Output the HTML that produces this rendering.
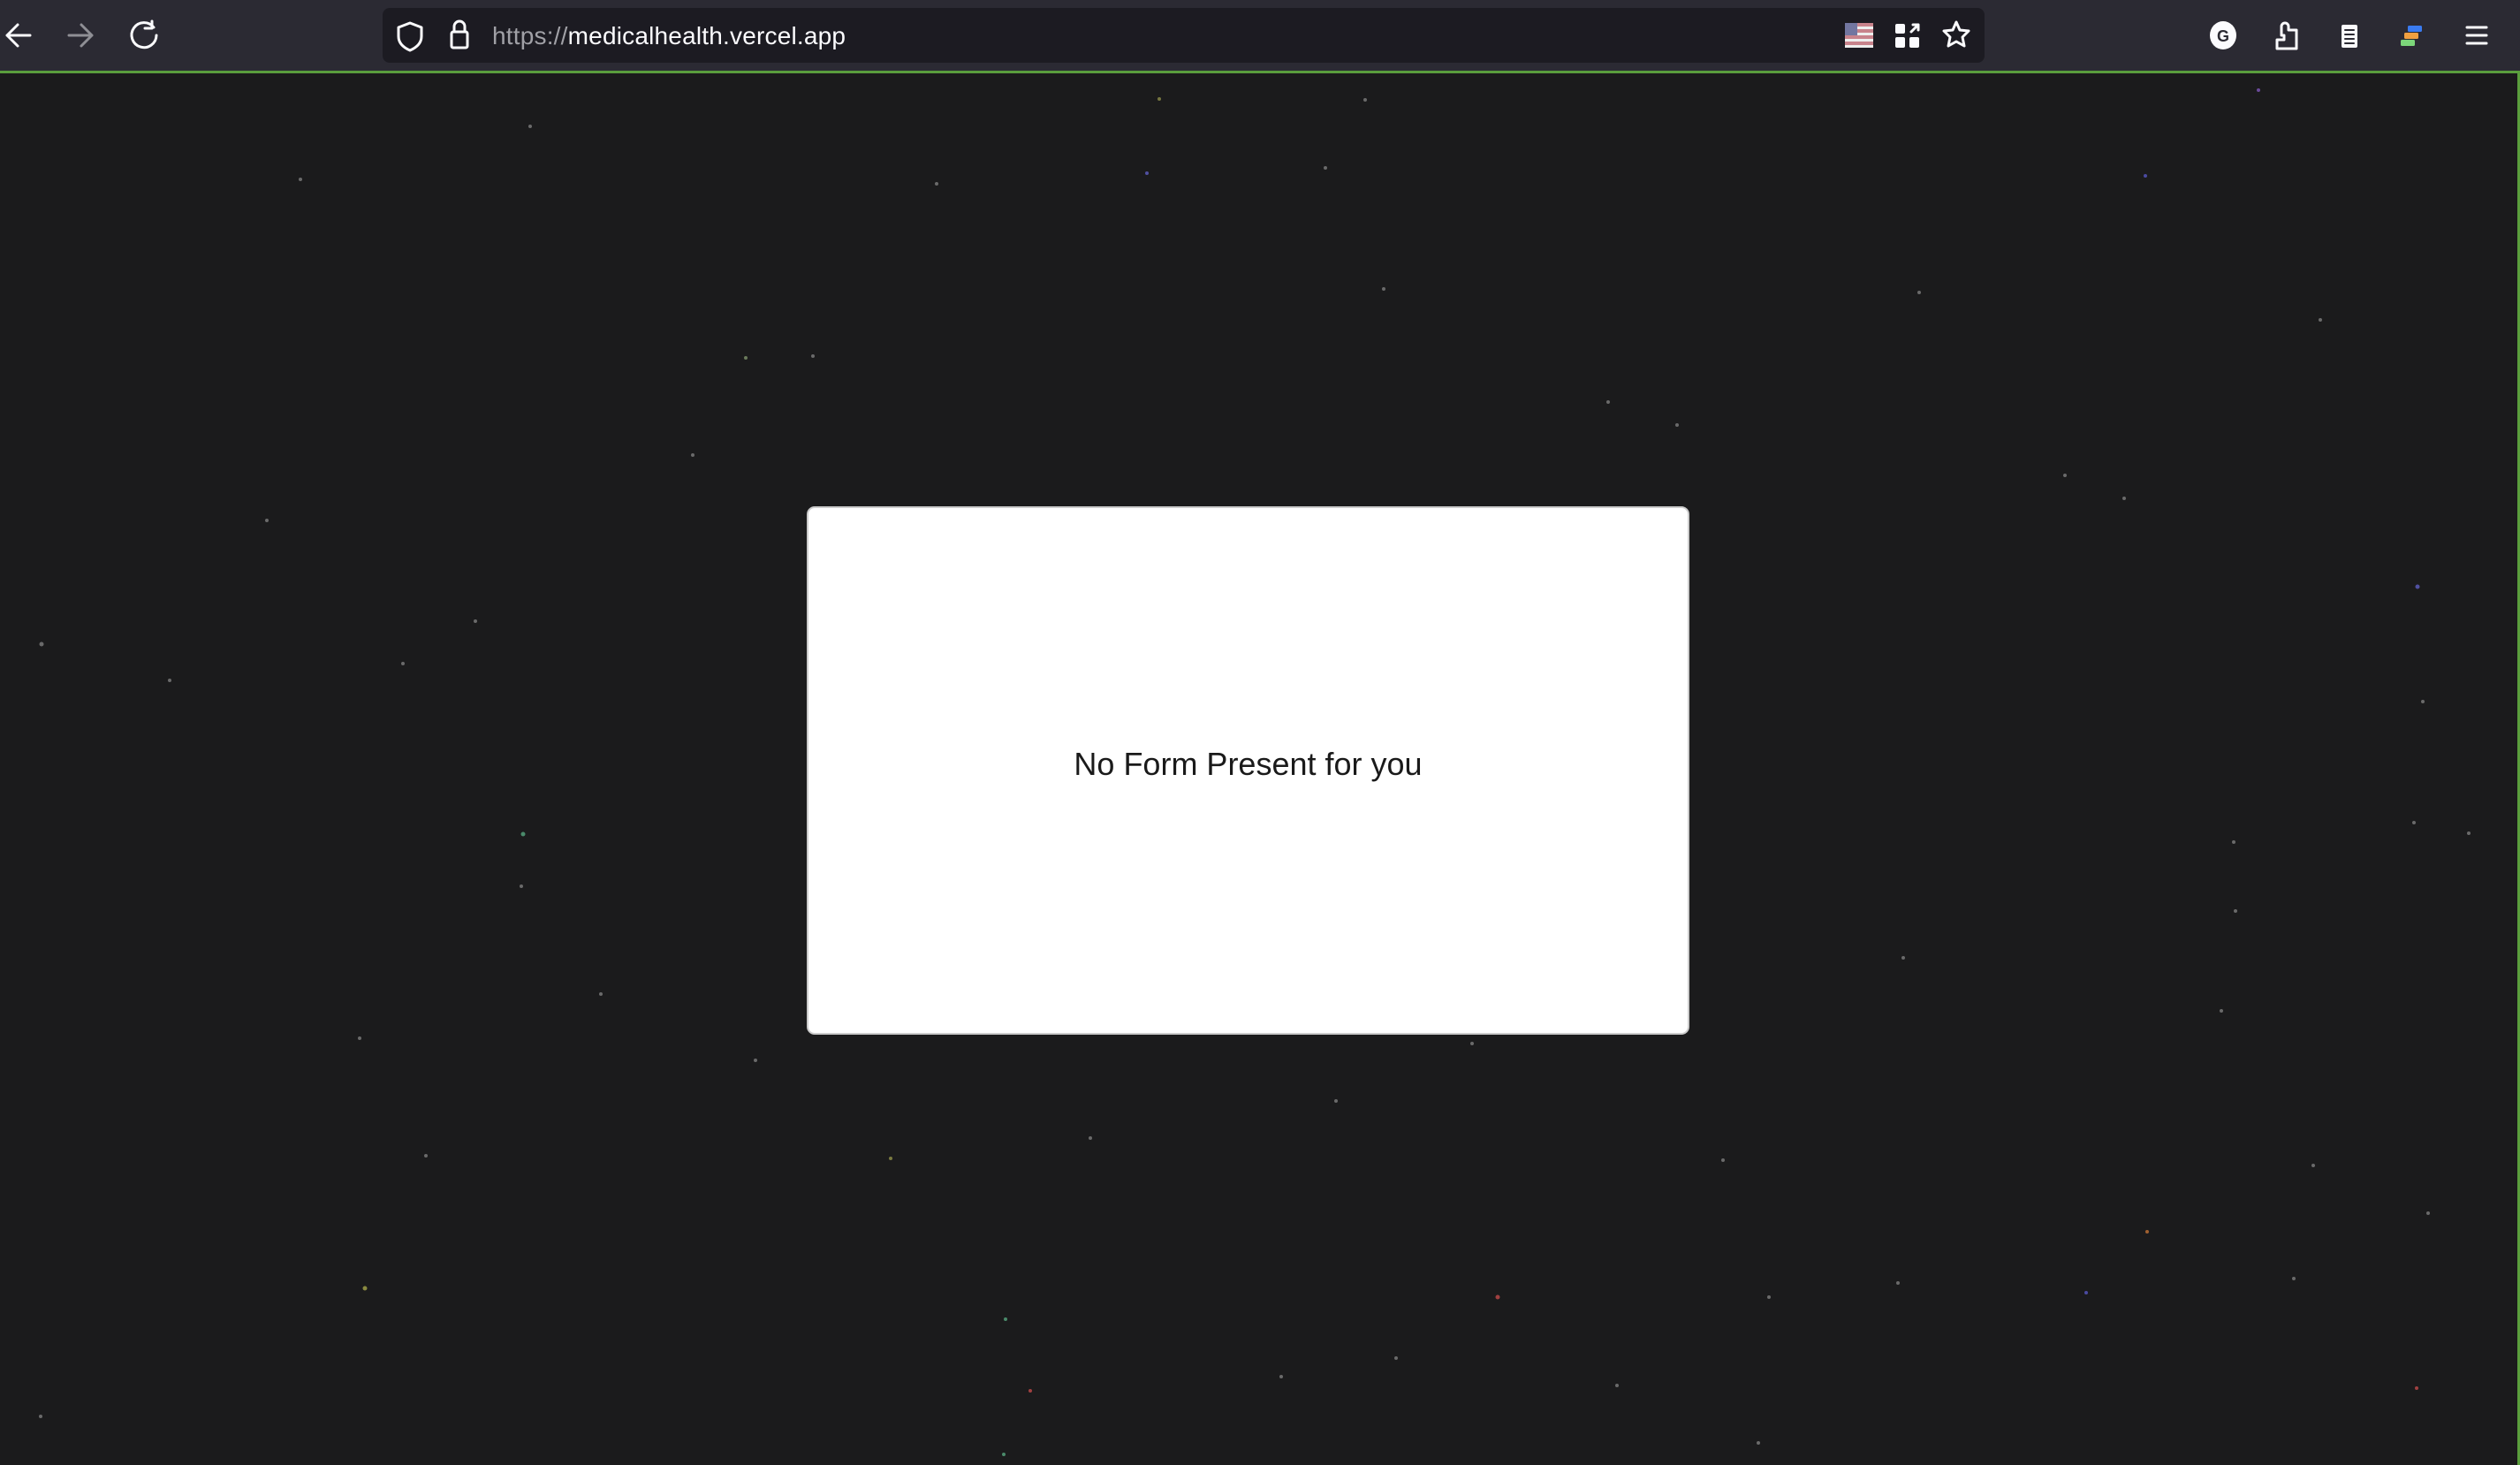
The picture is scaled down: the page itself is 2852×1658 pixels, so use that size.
<!DOCTYPE html>
<html><head><meta charset="utf-8"><style>
html,body{margin:0;padding:0;width:2852px;height:1658px;overflow:hidden;background:#1b1b1c;font-family:"Liberation Sans",sans-serif}
#tb{position:absolute;left:0;top:0;width:2852px;height:80px;background:#2b2a33}
#gl{position:absolute;left:0;top:80px;width:2852px;height:3px;background:#5a9e3d}
#gr{position:absolute;right:0;top:80px;width:3px;height:1578px;background:#5a9e3d}
#url{position:absolute;left:433px;top:9px;width:1813px;height:62px;background:#1c1b22;border-radius:8px}
#urltext{position:absolute;left:557px;top:25px;font-size:28px;color:#fbfbfe;letter-spacing:0.2px}
#urltext span{color:#a0a0a6}
svg.i{position:absolute}
#card{position:absolute;left:913px;top:573px;width:999px;height:598px;background:#fff;border-radius:9px;border:2px solid #ccc;box-sizing:border-box}
#msg{position:absolute;left:0;width:100%;top:269px;text-align:center;font-size:36px;color:#1a1a1a}
</style></head><body>
<div id="tb"></div><div id="gl"></div><div id="gr"></div>
<div id="url"></div>
<svg class="i" style="left:0;top:0" width="2852" height="80" fill="none" stroke="#fbfbfe" stroke-width="3" stroke-linecap="round" stroke-linejoin="round">
<path d="M34 40H8M20 28L8 40l12 12"/>
<path d="M78 40h26M92 28l12 12-12 12" stroke="#8f8f95"/>
<path d="M174 31a14 14 0 1 0 3 9M172 24v8h-8"/>
<path d="M464 26l13 5v10c0 8-6 13-13 16-7-3-13-8-13-16V31z"/>
<rect x="511" y="36" width="18" height="18" rx="2"/><path d="M514 36v-6a6 6 0 0 1 12 0v6"/>
<g stroke="none"><rect x="2088" y="26" width="32" height="28" fill="#c8838c"/><rect x="2088" y="30" width="32" height="3" fill="#eee"/><rect x="2088" y="37" width="32" height="3" fill="#eee"/><rect x="2088" y="44" width="32" height="3" fill="#eee"/><rect x="2088" y="51" width="32" height="3" fill="#eee"/><rect x="2088" y="26" width="14" height="14" fill="#7276a0"/></g>
<g fill="#fbfbfe" stroke="none"><rect x="2145" y="27" width="11" height="11" rx="2"/><rect x="2145" y="42" width="11" height="12" rx="2"/><rect x="2161" y="42" width="11" height="12" rx="2"/></g>
<path d="M2163 36l8-8M2165 28h6v6"/>
<path d="M2214 25l4 9 10 1-7 7 2 10-9-5-9 5 2-10-7-7 10-1z"/>
<ellipse cx="2516" cy="40" rx="15" ry="16" fill="#fbfbfe" stroke="none"/>
<text x="2516" y="47" font-size="18" font-weight="bold" fill="#2b2a33" stroke="none" text-anchor="middle" font-family="Liberation Sans">G</text>
<path d="M2577 55V45h8v-5h-3V30a4 4 0 0 1 8 0v4h9v21z"/>
<rect x="2650" y="28" width="18" height="26" rx="2" fill="#fbfbfe" stroke="none"/>
<path d="M2654 34h10M2654 39h10M2654 44h10M2654 49h10" stroke="#2b2a33" stroke-width="2"/>
<g stroke="none"><rect x="2725" y="29" width="16" height="7" rx="1.5" fill="#3a7bf0"/><rect x="2721" y="37" width="16" height="7" rx="1.5" fill="#f0a040"/><rect x="2717" y="45" width="16" height="7" rx="1.5" fill="#7cd67a"/></g>
<path d="M2792 31h22M2792 40h22M2792 49h22"/>
</svg>
<div id="urltext"><span>https://</span>medicalhealth.vercel.app</div>
<svg class="i" style="left:0;top:83px" width="2852" height="1575">
<g fill="#6a6a6a">
<circle cx="1312" cy="29" r="2" fill="#777740"/><circle cx="1545" cy="30" r="2"/><circle cx="1298" cy="113" r="2" fill="#5050a0"/><circle cx="1500" cy="107" r="2"/><circle cx="2556" cy="19" r="2" fill="#6a4a9a"/><circle cx="2428" cy="116" r="2" fill="#4a4aa0"/><circle cx="844" cy="322" r="2" fill="#6a7a5a"/><circle cx="784" cy="432" r="2"/><circle cx="302" cy="506" r="2"/><circle cx="47" cy="646" r="2.5"/><circle cx="192" cy="687" r="2"/><circle cx="456" cy="668" r="2"/><circle cx="538" cy="620" r="2"/><circle cx="592" cy="861" r="2.5" fill="#4a8a6a"/><circle cx="590" cy="920" r="2"/><circle cx="680" cy="1042" r="2"/><circle cx="407" cy="1092" r="2"/><circle cx="855" cy="1117" r="2"/><circle cx="482" cy="1225" r="2"/><circle cx="413" cy="1375" r="2.5" fill="#8a8a40"/><circle cx="1008" cy="1228" r="2" fill="#7a7a40"/><circle cx="1138" cy="1410" r="2" fill="#4a8a6a"/><circle cx="1166" cy="1491" r="2" fill="#a04040"/><circle cx="1695" cy="1385" r="2.5" fill="#a04040"/><circle cx="1580" cy="1454" r="2"/><circle cx="2002" cy="1385" r="2"/><circle cx="2148" cy="1369" r="2"/><circle cx="2430" cy="1311" r="2" fill="#a06030"/><circle cx="2596" cy="1364" r="2"/><circle cx="2736" cy="581" r="2.5" fill="#5050a0"/><circle cx="2742" cy="711" r="2"/><circle cx="2732" cy="848" r="2"/><circle cx="2794" cy="860" r="2"/><circle cx="2528" cy="870" r="2"/><circle cx="2530" cy="948" r="2"/><circle cx="2154" cy="1001" r="2"/><circle cx="2514" cy="1061" r="2"/><circle cx="2618" cy="1236" r="2"/><circle cx="2748" cy="1290" r="2"/><circle cx="2404" cy="481" r="2"/><circle cx="2337" cy="455" r="2"/><circle cx="2172" cy="248" r="2"/><circle cx="2626" cy="279" r="2"/><circle cx="1898" cy="398" r="2"/><circle cx="1820" cy="372" r="2"/><circle cx="1566" cy="244" r="2"/><circle cx="1060" cy="125" r="2"/><circle cx="920" cy="320" r="2"/><circle cx="1950" cy="1230" r="2"/><circle cx="1512" cy="1163" r="2"/><circle cx="1234" cy="1205" r="2"/><circle cx="1830" cy="1485" r="2"/><circle cx="1450" cy="1475" r="2"/><circle cx="2735" cy="1488" r="2" fill="#a04040"/><circle cx="2361" cy="1380" r="2" fill="#4a4aa0"/><circle cx="1136" cy="1563" r="2" fill="#4a8a6a"/><circle cx="46" cy="1520" r="2"/><circle cx="1990" cy="1550" r="2"/><circle cx="1228" cy="1045" r="2"/><circle cx="1666" cy="1098" r="2"/><circle cx="600" cy="60" r="2"/><circle cx="340" cy="120" r="2"/>
</g></svg>
<div id="card"><div id="msg">No Form Present for you</div></div>
</body></html>
